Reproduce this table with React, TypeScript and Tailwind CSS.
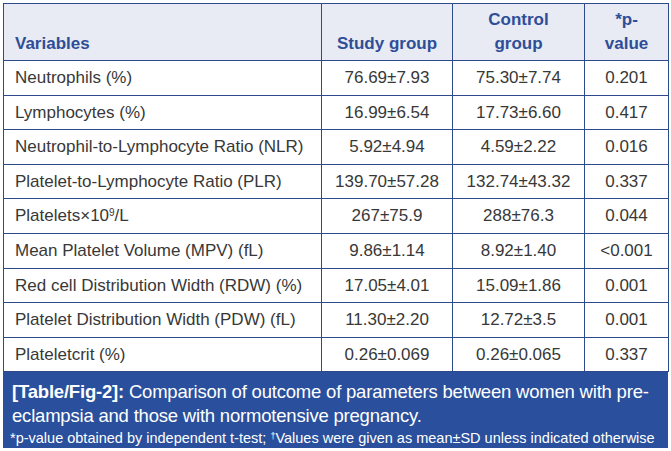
import React from "react";

const rows: [React.ReactNode, string, string, string][] = [
  ["Neutrophils (%)", "76.69±7.93", "75.30±7.74", "0.201"],
  ["Lymphocytes (%)", "16.99±6.54", "17.73±6.60", "0.417"],
  ["Neutrophil-to-Lymphocyte Ratio (NLR)", "5.92±4.94", "4.59±2.22", "0.016"],
  ["Platelet-to-Lymphocyte Ratio (PLR)", "139.70±57.28", "132.74±43.32", "0.337"],
  [
    <span>
      Platelets×10<sup className="text-[10px]">9</sup>/L
    </span>,
    "267±75.9",
    "288±76.3",
    "0.044",
  ],
  ["Mean Platelet Volume (MPV) (fL)", "9.86±1.14", "8.92±1.40", "<0.001"],
  ["Red cell Distribution Width (RDW) (%)", "17.05±4.01", "15.09±1.86", "0.001"],
  ["Platelet Distribution Width (PDW) (fL)", "11.30±2.20", "12.72±3.5", "0.001"],
  ["Plateletcrit (%)", "0.26±0.069", "0.26±0.065", "0.337"],
];

export default function App() {
  return (
    <div
      className="w-[671px] h-[451px] bg-white pt-[3px] pl-[3px]"
      style={{ fontFamily: '"Liberation Sans", Arial, sans-serif' }}
    >
      <div className="w-[665px]">
        <table className="border-collapse w-[665px] table-fixed text-[#383838]">
          <colgroup>
            <col className="w-[318px]" />
            <col className="w-[131px]" />
            <col className="w-[132px]" />
            <col className="w-[84px]" />
          </colgroup>
          <thead>
            <tr className="bg-[#e8ebf3] h-[57px] text-[#2f4e98] text-[17px] font-bold leading-[24px]">
              <th className="border border-[#2d4b8c] text-left align-bottom pl-[11px] pb-[4px]">Variables</th>
              <th className="border border-[#2d4b8c] text-center align-bottom pb-[4px]">Study group</th>
              <th className="border border-[#2d4b8c] text-center align-bottom pb-[4px]">
                Control
                <br />
                group
              </th>
              <th className="border border-[#2d4b8c] text-center align-bottom pb-[4px]">
                *p-
                <br />
                value
              </th>
            </tr>
          </thead>
          <tbody className="text-[17px]">
            {rows.map((r, i) => (
              <tr key={i} className="h-[34.6px]">
                <td className="border border-[#2d4b8c] pl-[11px] whitespace-nowrap">{r[0]}</td>
                <td className="border border-[#2d4b8c] text-center">{r[1]}</td>
                <td className="border border-[#2d4b8c] text-center">{r[2]}</td>
                <td className="border border-[#2d4b8c] text-center">{r[3]}</td>
              </tr>
            ))}
          </tbody>
        </table>
        <div className="bg-[#2a4f9c] text-white pl-[9px] pt-[8px] h-[76px] overflow-hidden">
          <p className="text-[18.5px] leading-[24px] whitespace-nowrap tracking-[-0.2px]">
            <span className="font-bold">[Table/Fig-2]:</span> Comparison of outcome of parameters between women with pre-
            <br />
            eclampsia and those with normotensive pregnancy.
          </p>
          <p className="text-[14.5px] leading-[20px] whitespace-nowrap -ml-[2px]">
            *p-value obtained by independent t-test; <sup className="text-[9px]">†</sup>Values were given as mean±SD unless indicated otherwise
          </p>
        </div>
      </div>
    </div>
  );
}
